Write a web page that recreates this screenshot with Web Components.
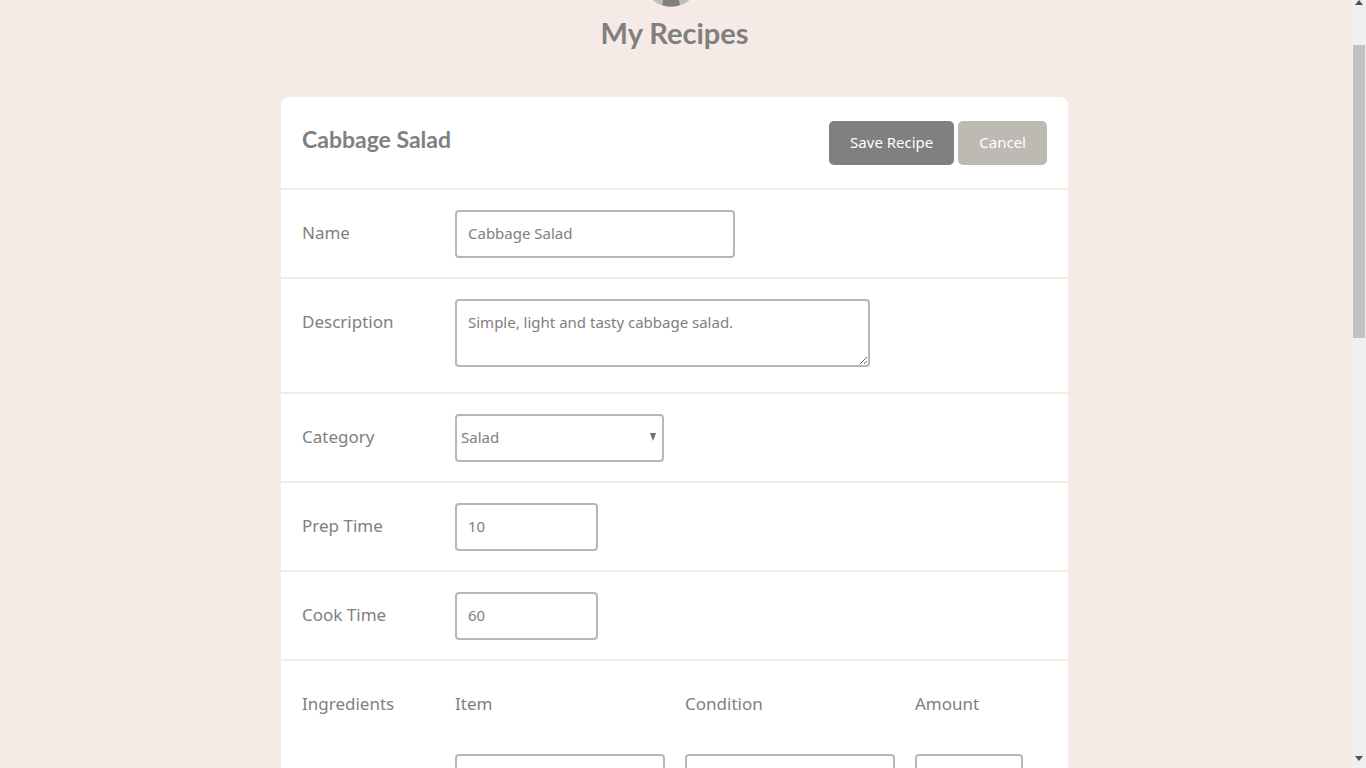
<!DOCTYPE html>
<html lang="en">
<head>
<meta charset="utf-8">
<meta name="viewport" content="width=device-width, initial-scale=1">
<title>My Recipes</title>
<style>
  :root {
    --blush: #f5eae5;
    --ink: #808080;
    --stone: #bdb9b3;
    --field-line: #b9b7b3;
  }
  body {
    margin: 0;
    background: var(--blush);
    color: var(--ink);
    font: 17px/24px "Noto Sans", "Open Sans", sans-serif;
  }
</style>
</head>
<body>
<recipe-app></recipe-app>

<script>
const define = (name, html, setup) => {
  const template = document.createElement('template');
  template.innerHTML = html;
  customElements.define(name, class extends HTMLElement {
    constructor() {
      super();
      this.attachShadow({ mode: 'open' }).append(template.content.cloneNode(true));
    }
    connectedCallback() {
      if (setup) setup.call(this, this.shadowRoot);
    }
  });
};

const controlStyles = `
  * { box-sizing: border-box; }
  input, textarea, select {
    display: block;
    width: 100%;
    margin: 0;
    border: 2px solid var(--field-line);
    border-radius: 4px;
    background: #fff;
    color: inherit;
    font-family: inherit;
    font-size: 15px;
    line-height: 20px;
    outline: none;
  }
  input, select { height: 48px; }
  input { padding: 0 11px 2px; }
  textarea { height: 68px; padding: 11px; }
  select { appearance: none; padding: 0 24px 2px 4px; }
`;

define('site-header', `
  <style>
    :host { display: flex; flex-direction: column; align-items: center; }
    svg { display: block; width: 56px; height: 56px; margin: -49px 8px 0 0; }
    h1 { margin: 6px 0 0; font-family: Lato, sans-serif; font-size: 29px; line-height: 40px; font-weight: 700; }
  </style>
  <svg viewBox="0 0 56 56" aria-hidden="true">
    <circle cx="28" cy="28" r="28" fill="#c4bdb8"/>
    <path d="M21 46h14l2 8q-9 3-18 0z" fill="#808080"/>
    <circle cx="28" cy="24" r="13" fill="#808080"/>
  </svg>
  <h1><slot></slot></h1>
`);

define('recipe-button', `
  <style>
    :host { display: block; }
    button {
      height: 44px;
      padding: 0 21px 2px;
      border: 0;
      border-radius: 5px;
      background: var(--button-color, var(--ink));
      color: #fff;
      font-family: inherit;
      font-size: 15px;
      line-height: 20px;
      cursor: pointer;
    }
    :host([kind="quiet"]) button { background: var(--stone); }
  </style>
  <button type="button"><slot></slot></button>
`);

define('card-header', `
  <style>
    :host {
      display: flex;
      justify-content: space-between;
      align-items: flex-start;
      padding: 24px 21px 23px;
    }
    h2 { margin: 0; font-family: Lato, sans-serif; font-size: 23px; line-height: 36px; font-weight: 700; }
    div { display: flex; gap: 4px; }
  </style>
  <h2><slot></slot></h2>
  <div><slot name="actions"></slot></div>
`);

define('recipe-field', `
  <style>
    ${controlStyles}
    :host {
      display: grid;
      grid-template-columns: 153px minmax(0, 1fr);
      align-items: start;
      padding: 20px 21px 19px;
      border-top: 2px solid var(--blush);
    }
    label { padding-top: 11px; }
    .control { position: relative; width: 100%; max-width: 280px; }
    :host([type="number"]) .control { max-width: 143px; }
    :host([type="select"]) .control { max-width: 209px; }
    :host([type="textarea"]) .control { max-width: 415px; padding-bottom: 6px; }
    svg { display: none; position: absolute; right: 7px; top: 19px; width: 8px; height: 8px; pointer-events: none; }
    :host([type="select"]) svg { display: block; }
  </style>
  <label for="control"></label>
  <div class="control"><svg viewBox="0 0 8 8" aria-hidden="true"><path d="M1 0h6L4 8z" fill="#707070"/></svg></div>
`, function (root) {
  const type = this.getAttribute('type');
  const value = this.getAttribute('value');
  const tag = type === 'textarea' || type === 'select' ? type : 'input';
  const control = document.createElement(tag);
  control.id = 'control';
  if (tag === 'select') control.add(new Option(value));
  else control.value = value;
  if (type === 'number') control.inputMode = 'numeric';
  root.querySelector('label').textContent = this.getAttribute('label');
  root.querySelector('.control').prepend(control);
});

define('ingredient-list', `
  <style>
    ${controlStyles}
    :host {
      display: grid;
      grid-template-columns: 153px minmax(0, 1fr);
      align-items: start;
      padding: 20px 21px 19px;
      border-top: 2px solid var(--blush);
    }
    .name { padding-top: 11px; }
    .items { display: grid; grid-template-columns: 210px 210px 108px; column-gap: 20px; padding-top: 11px; }
    label { padding-bottom: 38px; }
  </style>
  <div class="name">Ingredients</div>
  <div class="items">
    <label for="item">Item</label>
    <label for="condition">Condition</label>
    <label for="amount">Amount</label>
    <input id="item" type="text">
    <input id="condition" type="text">
    <input id="amount" type="text">
  </div>
`);

define('recipe-card', `
  <style>
    :host { display: block; overflow: hidden; border-radius: 8px; background: #fff; }
  </style>
  <slot></slot>
`);

define('scroll-rail', `
  <style>
    :host { display: flex; flex-direction: column; align-items: center; background: #f0f0f0; }
    svg { flex: none; width: 8px; height: 5px; }
    .track { flex: 1; display: flex; flex-direction: column; width: 12px; padding: 40px 0; }
    .thumb { flex: 293; background: #c1c1c1; }
    .after { flex: 377; }
  </style>
  <svg viewBox="0 0 8 5" aria-hidden="true"><path d="M4 0l4 5H0z" fill="#505050"/></svg>
  <div class="track"><div class="thumb"></div><div class="after"></div></div>
  <svg viewBox="0 0 8 5" aria-hidden="true"><path d="M0 0h8L4 5z" fill="#505050"/></svg>
`);

define('recipe-app', `
  <style>
    :host {
      display: grid;
      grid-template-columns: minmax(0, 1fr) 15px;
      height: 100vh;
      overflow: hidden;
    }
    main { overflow: hidden; padding: 0 2px 0 0; }
    recipe-card { width: calc(100% - 40px); max-width: 787px; margin: 44px auto 0; }
    scroll-rail { box-sizing: border-box; height: 100vh; padding: 0 0 7px; }
  </style>
  <main>
    <site-header>My Recipes</site-header>
    <recipe-card>
      <card-header>Cabbage Salad
        <recipe-button slot="actions">Save Recipe</recipe-button>
        <recipe-button slot="actions" kind="quiet">Cancel</recipe-button>
      </card-header>
      <recipe-field label="Name" type="text" value="Cabbage Salad"></recipe-field>
      <recipe-field label="Description" type="textarea" value="Simple, light and tasty cabbage salad."></recipe-field>
      <recipe-field label="Category" type="select" value="Salad"></recipe-field>
      <recipe-field label="Prep Time" type="number" value="10"></recipe-field>
      <recipe-field label="Cook Time" type="number" value="60"></recipe-field>
      <ingredient-list></ingredient-list>
    </recipe-card>
  </main>
  <scroll-rail></scroll-rail>
`);
</script>
</body>
</html>
